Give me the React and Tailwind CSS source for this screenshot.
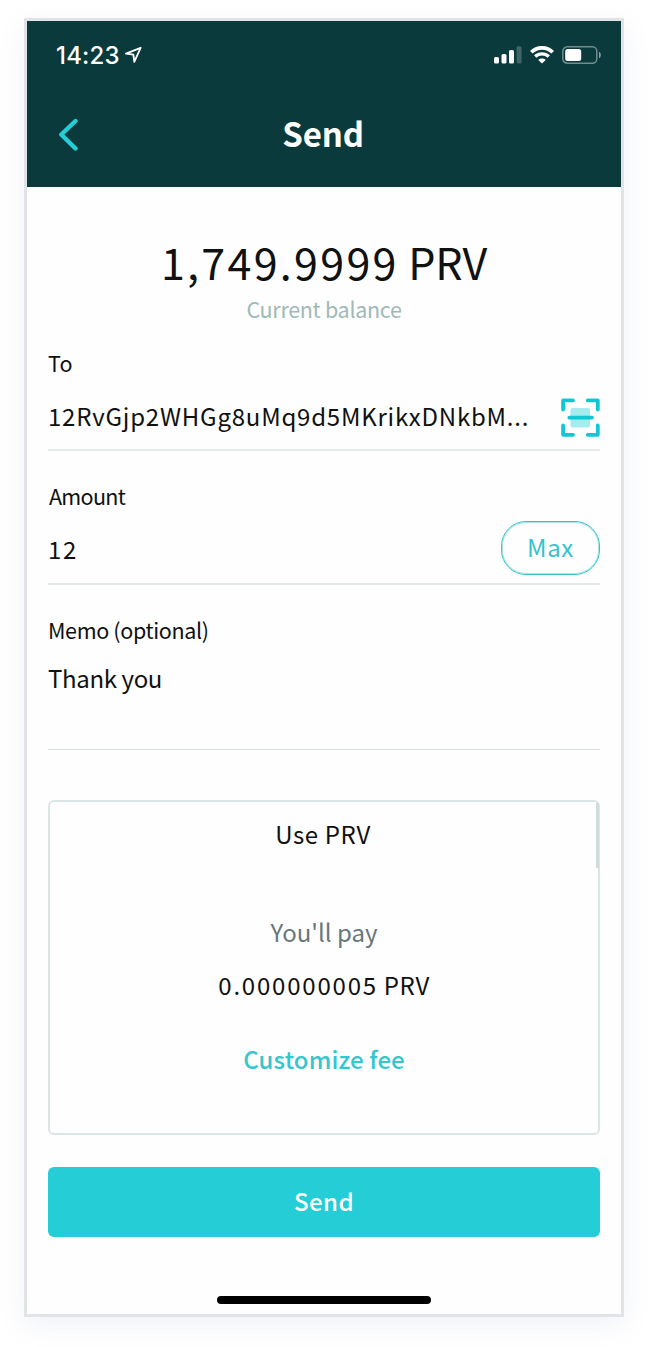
function Line({ className = "", children }) {
  return <p className={`whitespace-nowrap ${className}`}>{children}</p>;
}

function StatusBar() {
  return (
    <div className="flex h-[68px] items-center justify-between pl-[29px] pr-[19px] text-white">
      <div className="flex items-center gap-[5px] pt-px">
        <span className="font-['Inter',sans-serif] text-[24px] font-medium leading-[30px] tracking-[0.2px]">14:23</span>
        <svg width="17" height="17" viewBox="0 0 17 17" fill="none" stroke="currentColor" strokeWidth="1.8" strokeLinejoin="round">
          <path d="M15.6 0.9 1 6.7 8.4 7.7 9.3 14.8Z" />
        </svg>
      </div>
      <div className="flex items-center">
        <svg width="28" height="18" viewBox="0 0 28 18" fill="currentColor">
          <rect x="0" y="11" width="5" height="6.5" rx="1.5" />
          <rect x="7.5" y="8" width="5" height="9.5" rx="1.5" />
          <rect x="15" y="4" width="5" height="13.5" rx="1.5" />
          <rect x="22.6" y="0.2" width="5" height="17.3" rx="1.5" opacity="0.22" />
        </svg>
        <svg className="ml-[8px]" width="24" height="18" viewBox="0 0 24 18" fill="none" stroke="currentColor">
          <path d="M1.3 6.2C7.3 .3 16.7 .3 22.7 6.2" strokeWidth="3.7" />
          <path d="M5.2 10.6C9.1 6.9 14.9 6.9 18.8 10.6" strokeWidth="3.4" />
          <path d="M12 17.6 8.3 13.9C10.3 12 13.7 12 15.7 13.9Z" fill="currentColor" stroke="none" />
        </svg>
        <svg className="ml-[8px]" width="40" height="18" viewBox="0 0 40 18">
          <rect x="0.8" y="0.8" width="34" height="16.4" rx="4.5" fill="none" stroke="#fff" strokeOpacity="0.42" strokeWidth="1.5" />
          <rect x="3.2" y="3" width="16" height="12" rx="2.5" fill="#fff" />
          <path d="M37 5.7C39.4 6.8 39.4 11.2 37 12.3Z" fill="#fff" fillOpacity="0.5" />
        </svg>
      </div>
    </div>
  );
}

function ScanIcon() {
  return (
    <svg className="mt-[4px]" width="40" height="40" viewBox="0 0 40 40" fill="none">
      <rect x="10.5" y="10" width="19.5" height="19.5" rx="2" fill="#a5ecee" />
      <g stroke="#0fc8d2" strokeWidth="3.8" strokeLinecap="round" strokeLinejoin="round">
        <path d="M13 2.4H3.1V11.5M27.8 2.4H37.8V11.5M37.8 27.5V36.8H27.8M13 36.8H3.1V27.5M9.3 19.6H32" />
      </g>
    </svg>
  );
}

export default function App() {
  return (
    <div className="h-[1347px] w-[648px] bg-white px-[24px] pt-[18px] font-['Noto_Sans_CJK_SC',sans-serif] text-[#101111]">
      <main className="flex h-[1299px] w-[600px] flex-col border-[3px] border-[#e0e4e6] bg-[#fefefe] shadow-[0_8px_24px_rgba(120,140,185,0.11)]">
        <header className="h-[166px] shrink-0 bg-[#0b3a3c]">
          <StatusBar />
          <div className="grid h-[90px] grid-cols-[1fr_auto_1fr] items-center pl-[31px] pr-[33px]">
            <svg width="21" height="33" viewBox="0 0 21 33" fill="none" stroke="#25cdd6" strokeWidth="4.4" strokeLinecap="round" strokeLinejoin="round">
              <path d="M17.5 3 3.3 16.5 17.5 30.5" />
            </svg>
            <h1 className="-mt-[2px] text-[33px] font-bold leading-[48px] tracking-[-0.2px] text-white">Send</h1>
          </div>
        </header>

        <div className="flex grow flex-col px-[21px]">
          <section className="flex flex-col items-center pt-[49px] text-center">
            <Line className="text-[43px] leading-[50px] tracking-[-0.2px]">
              <span className="tracking-[2.3px]">1,749.9999</span> PRV
            </Line>
            <Line className="mt-[8px] text-[21.5px] leading-[30px] tracking-[-0.3px] text-[#a0b9b8]">Current balance</Line>
          </section>

          <section className="h-[127px] border-b-2 border-[#e5eaea] pt-[24px]">
            <Line className="text-[21.5px] leading-[30px] tracking-[0.3px]">To</Line>
            <div className="mt-[18px] flex h-[40px] items-center justify-between">
              <Line className="text-[24px] leading-[36px] tracking-[0.78px]">12RvGjp2WHGg8uMq9d5MKrikxDNkbM...</Line>
              <ScanIcon />
            </div>
          </section>

          <section className="h-[134px] border-b-2 border-[#e5eaea] pt-[30px]">
            <Line className="pl-px text-[21.5px] leading-[30px] tracking-[-0.7px]">Amount</Line>
            <div className="mt-[10px] flex h-[54px] items-center justify-between">
              <Line className="mt-[2px] text-[24px] leading-[36px] tracking-[1.8px]">12</Line>
              <button className="h-[54px] w-[99px] rounded-[25px] border border-[#35c3cc] text-[24px] leading-[48px] tracking-[0.6px] text-[#35c3cc] shadow-[inset_0_0_0_1px_rgba(53,195,204,0.4)]"><span className="relative -top-px">Max</span></button>
            </div>
          </section>

          <section className="h-[165px] border-b border-[#d8dfdf] pt-[30px]">
            <Line className="text-[21.5px] leading-[30px] tracking-[-0.35px]">Memo (optional)</Line>
            <Line className="mt-[15px] text-[24px] leading-[36px] tracking-[-0.35px]">Thank you</Line>
          </section>

          <section className="relative mt-[50px] h-[335px] rounded-[6px] border-2 border-[#dae6e6] pt-[14px] text-center text-[24px] leading-[36px]">
            <Line className="pr-[2px] tracking-[0.6px]">Use PRV</Line>
            <Line className="mt-[62px] tracking-[0px] text-[#67777a]">You'll pay</Line>
            <Line className="mt-[17px] tracking-[0.5px]">
              <span className="tracking-[1.8px]">0.000000005</span> PRV
            </Line>
            <Line className="mt-[38px] font-medium tracking-[0.1px] text-[#35c6cf]">Customize fee</Line>
            <span className="absolute -right-px top-[1px] h-[65px] w-[3px] bg-[#d0dcdc]" />
          </section>

          <button className="mt-[32px] h-[70px] rounded-[6px] bg-[#25cdd7] pb-[2px] text-[24px] font-medium leading-[64px] tracking-[0.4px] text-white">Send</button>
          <div className="mx-auto mt-[59px] h-[8px] w-[214px] rounded-full bg-black" />
        </div>
      </main>
    </div>
  );
}
